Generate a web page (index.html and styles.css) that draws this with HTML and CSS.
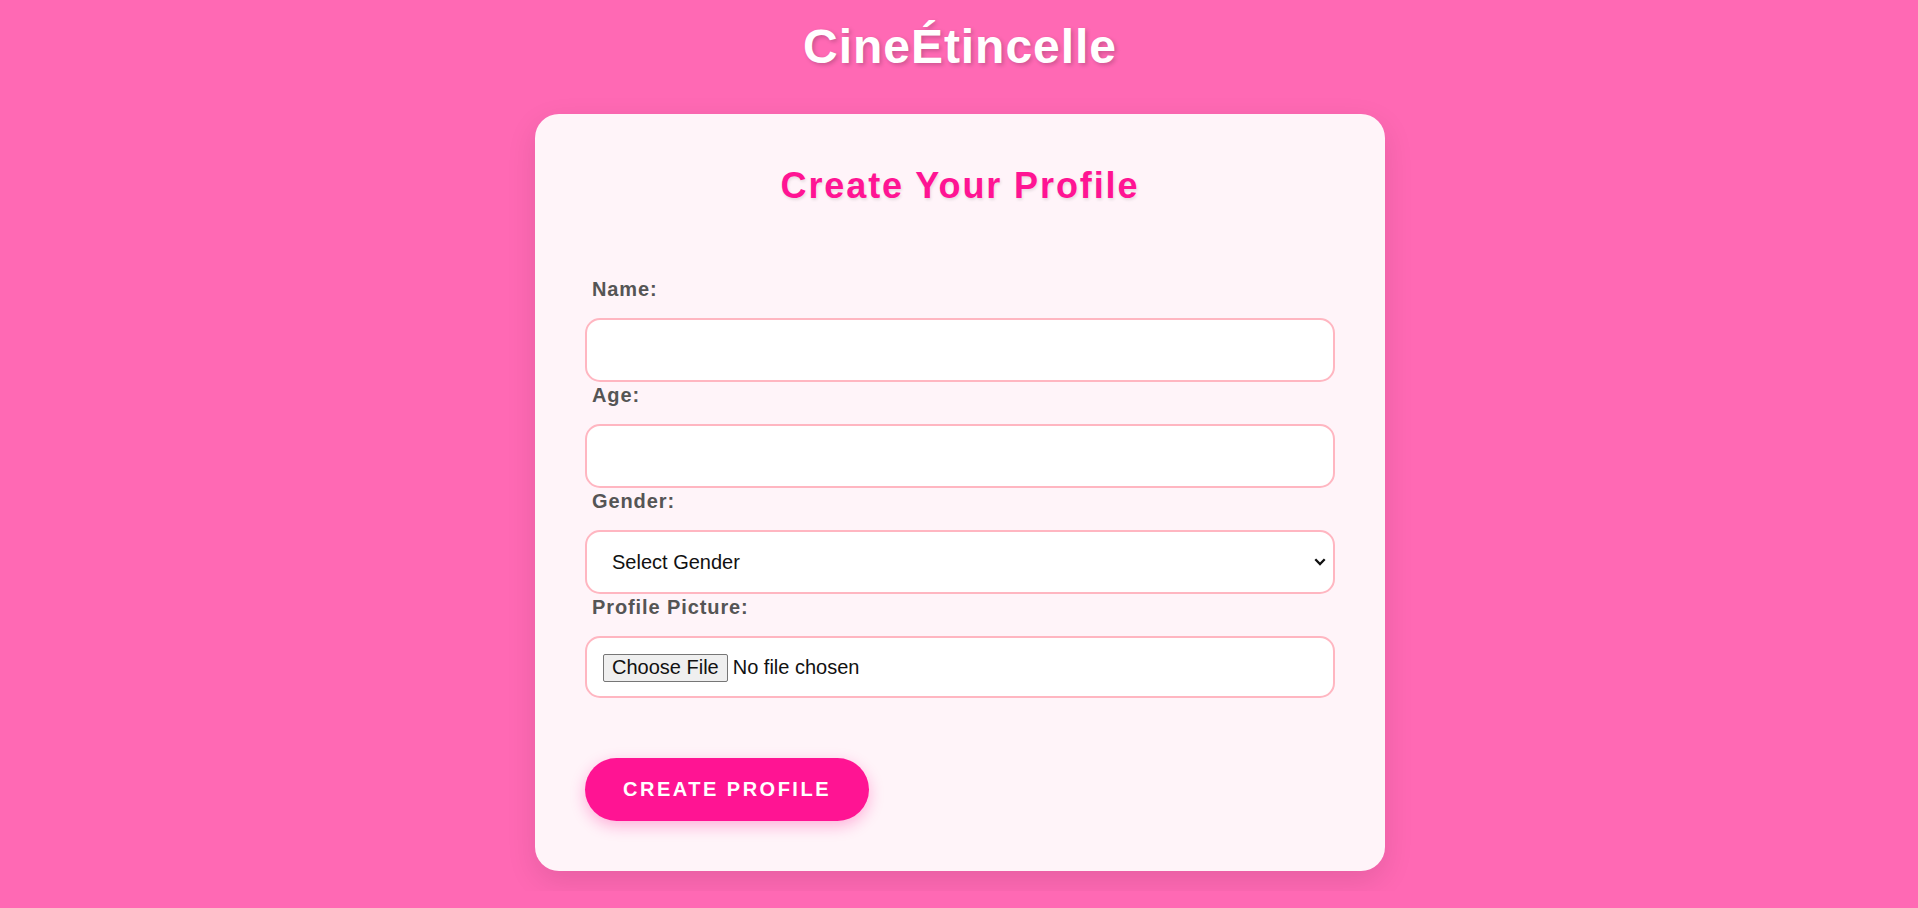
FILE: index.html
```html
<!DOCTYPE html>
<html lang="en">
<head>
<meta charset="utf-8">
<title>CineÉtincelle - Create Your Profile</title>
<link rel="stylesheet" href="styles.css">
</head>
<body>
  <h1 class="brand">CineÉtincelle</h1>
  <main class="card">
    <h2 class="card-title">Create Your Profile</h2>
    <form class="profile-form">
      <label class="field-label" for="name">Name:</label>
      <input class="field" type="text" id="name">
      <label class="field-label" for="age">Age:</label>
      <input class="field" type="number" id="age">
      <label class="field-label" for="gender">Gender:</label>
      <select class="field field-select" id="gender">
        <option>Select Gender</option>
        <option>Female</option>
        <option>Male</option>
        <option>Other</option>
      </select>
      <label class="field-label" for="pic">Profile Picture:</label>
      <input class="field field-file" type="file" id="pic">
      <div class="actions">
        <button class="submit-btn" type="button">Create Profile</button>
      </div>
    </form>
  </main>
</body>
</html>
```
FILE: styles.css
```css
* {
  box-sizing: border-box;
}

html, body {
  margin: 0;
}

body {
  background: #ff69b4;
  font-family: "Liberation Sans", Arial, sans-serif;
  padding: 19px 0 20px 2px;
}

.brand {
  margin: 0 0 40px;
  text-align: center;
  color: #ffffff;
  font-size: 48px;
  line-height: 55px;
  font-weight: bold;
  letter-spacing: 0.95px;
  text-shadow: 2px 2px 4px rgba(0, 0, 0, 0.2);
}

.card {
  width: 850px;
  margin: 0 auto;
  background: #fff4f9;
  border-radius: 24px;
  padding: 51px 50px 50px;
  box-shadow: 0 10px 30px rgba(0, 0, 0, 0.1);
}

.card-title {
  margin: 0 0 70px;
  text-align: center;
  color: #ff1493;
  font-size: 36px;
  line-height: 41px;
  font-weight: bold;
  letter-spacing: 1.9px;
  text-shadow: 1px 2px 3px rgba(0, 0, 0, 0.1);
}

.profile-form {
  display: flex;
  flex-direction: column;
  align-items: stretch;
}

.field-label {
  display: block;
  margin: 2px 0 17px;
  padding: 0 7px;
  color: #555555;
  font-size: 20px;
  line-height: 23px;
  font-weight: bold;
  letter-spacing: 0.9px;
}

.field {
  display: block;
  width: 100%;
  height: 64px;
  margin: 0;
  padding: 0 22px;
  background: #ffffff;
  border: 2px solid #ffb6c1;
  border-radius: 15px;
  font-family: "Liberation Sans", Arial, sans-serif;
  font-size: 20px;
  color: #111111;
  outline: none;
}

.field-select {
  appearance: none;
  -webkit-appearance: none;
  padding: 0 40px 0 25px;
  background-color: #ffffff;
  background-image: url("data:image/svg+xml;utf8,<svg xmlns='http://www.w3.org/2000/svg' width='12' height='8' viewBox='0 0 12 8'><path d='M1.3 1.3 L6 6 L10.7 1.3' fill='none' stroke='%23111111' stroke-width='2.3'/></svg>");
  background-repeat: no-repeat;
  background-position: right 7px center;
  background-size: 12px 8px;
}

.field-file {
  height: 62px;
  padding: 15px 16px;
  line-height: 28px;
}

.field-file::file-selector-button {
  font-family: "Liberation Sans", Arial, sans-serif;
  font-size: 20px;
  height: 28px;
  padding: 0 8px;
  margin: 0 5px 0 0;
  background: #efefef;
  color: #111111;
  border: 1px solid #767676;
  border-radius: 2px;
}

.actions {
  display: flex;
  margin-top: 60px;
}

.submit-btn {
  background: #ff1493;
  color: #ffffff;
  border: none;
  border-radius: 50px;
  padding: 20px 38px;
  font-family: "Liberation Sans", Arial, sans-serif;
  font-size: 20px;
  line-height: 23px;
  font-weight: bold;
  text-transform: uppercase;
  letter-spacing: 2.5px;
  box-shadow: 0 5px 15px rgba(255, 20, 147, 0.3);
  cursor: pointer;
}
```
